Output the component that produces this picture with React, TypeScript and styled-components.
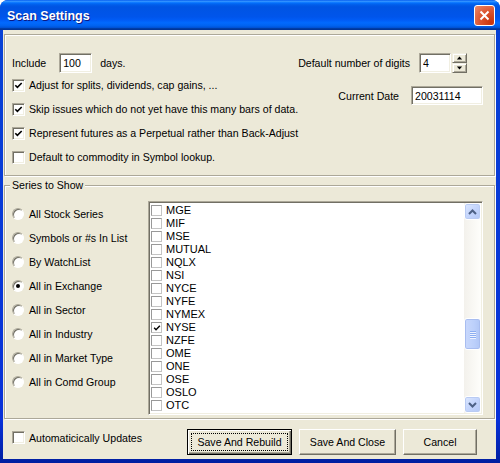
import React from 'react';
import styled, { createGlobalStyle } from 'styled-components';

const GlobalStyle = createGlobalStyle`
  html, body { margin: 0; padding: 0; background: #fff; }
  body {
    font-family: "Liberation Sans", Arial, sans-serif;
    font-size: 10.6px;
    color: #000;
  }
`;

const FONT = `"Liberation Sans", Arial, sans-serif`;

const Window = styled.div`
  width: 500px;
  height: 463px;
  display: flex;
  flex-direction: column;
  border-radius: 8px 8px 0 0;
  overflow: hidden;
  background: #0842d6;
`;

const TitleBar = styled.div`
  height: 30px;
  flex: none;
  display: flex;
  align-items: center;
  padding: 0 5px 0 7px;
  box-sizing: border-box;
  background: linear-gradient(
    to bottom,
    #0058ee 0%, #3593ff 4%, #288eff 6%, #127dff 8%, #036ffc 10%,
    #0262ee 14%, #0057e5 20%, #0054e3 24%, #0055eb 56%, #005bf5 66%,
    #026afe 76%, #0062ef 86%, #0052d6 92%, #0040ab 94%, #003092 100%
  );
`;

const Title = styled.span`
  flex: 1;
  color: #fff;
  font: bold 12.5px ${FONT};
  text-shadow: 1px 1px #0a1883;
  margin-top: 2px;
`;

const CloseButton = styled.div`
  width: 21px;
  height: 21px;
  box-sizing: border-box;
  border: 1px solid #fff;
  border-radius: 3px;
  background: radial-gradient(circle at 85% 85%, #c8340a 0%, #dc5530 50%, #ea8a6c 100%);
  display: flex;
  align-items: center;
  justify-content: center;
`;

const Frame = styled.div`
  flex: 1;
  display: flex;
  padding: 0 4px 4px 3px;
  background: linear-gradient(to bottom, #0842d6, #0831d9 90%, #001ea0);
`;

const Client = styled.div`
  flex: 1;
  display: flex;
  flex-direction: column;
  padding: 4px 1px 0;
  background: #ece9d8;
`;

const Panel = styled.div`
  height: 142px;
  flex: none;
  box-sizing: border-box;
  border: 1px solid #aca899;
  box-shadow: inset 1px 1px #fff, 1px 1px #fff;
  display: grid;
  grid-template-columns: 1fr auto;
  align-items: start;
  padding: 18px 11px 0 7px;
`;

const LeftCol = styled.div`
  display: flex;
  flex-direction: column;
`;

const IncludeRow = styled.div`
  height: 20px;
  display: flex;
  align-items: center;
`;

const Label = styled.span<{ $gap?: number }>`
  margin-right: ${p => p.$gap ?? 0}px;
  white-space: nowrap;
`;

const TextBox = styled.input<{ $w: number }>`
  width: ${p => p.$w}px;
  height: 20px;
  box-sizing: border-box;
  margin: 0;
  padding: 0 0 0 3px;
  background: #fff;
  font: 10.6px ${FONT};
  color: #000;
  border: 1px solid;
  border-color: #aca899 #fff #fff #aca899;
  box-shadow: inset 1px 1px #716f64, inset -1px -1px #f1efe2;
  outline: none;
`;

const CheckRow = styled.div<{ $h?: number }>`
  height: ${p => p.$h ?? 24}px;
  display: flex;
  align-items: center;
  gap: 4px;
  white-space: nowrap;
`;

const CheckBox = styled.span`
  width: 13px;
  height: 13px;
  flex: none;
  box-sizing: border-box;
  background: #fff;
  border: 1px solid;
  border-color: #aca899 #fff #fff #aca899;
  box-shadow: inset 1px 1px #716f64, inset -1px -1px #f1efe2;
  display: flex;
  align-items: center;
  justify-content: center;
`;

const RightCol = styled.div`
  display: flex;
  flex-direction: column;
  align-items: flex-end;
  gap: 13px;
`;

const FieldRow = styled.div<{ $gap: number; $right?: number }>`
  display: flex;
  align-items: center;
  gap: ${p => p.$gap}px;
  margin-right: ${p => p.$right ?? 0}px;
`;

const Spin = styled.div`
  display: flex;
  align-items: center;
`;

const SpinButtons = styled.div`
  display: flex;
  flex-direction: column;
  margin-left: 1px;
`;

const SpinButton = styled.div`
  width: 15px;
  height: 10px;
  box-sizing: border-box;
  background: #ece9d8;
  border: 1px solid;
  border-color: #f1efe2 #716f64 #716f64 #f1efe2;
  box-shadow: inset 1px 1px #fff, inset -1px -1px #aca899;
  display: flex;
  align-items: center;
  justify-content: center;
`;

const Group = styled.fieldset`
  margin: 3px 0 0;
  padding: 9px 11px 3px 7px;
  border: 1px solid #aca899;
  box-shadow: inset 1px 1px #fff, 1px 1px #fff;
  min-width: 0;
  flex: none;
`;

const Legend = styled.legend`
  margin-left: -2px;
  padding: 0 2px;
  line-height: 13px;
  background: #ece9d8;
`;

const GroupBody = styled.div`
  display: flex;
  height: 214px;
`;

const RadioCol = styled.div`
  width: 136px;
  flex: none;
  display: flex;
  flex-direction: column;
  padding-top: 1px;
`;

const RadioRow = styled.div`
  height: 24px;
  display: flex;
  align-items: center;
  gap: 5px;
  white-space: nowrap;
`;

const Radio = styled.span<{ $on?: boolean }>`
  width: 12px;
  height: 12px;
  flex: none;
  box-sizing: border-box;
  border-radius: 50%;
  background: #fff;
  border: 1px solid;
  border-color: #aca899 #fff #fff #aca899;
  box-shadow: inset 1px 1px #716f64;
  display: flex;
  align-items: center;
  justify-content: center;
  &::after {
    content: '';
    width: 4px;
    height: 4px;
    border-radius: 50%;
    background: ${p => (p.$on ? '#000' : 'transparent')};
  }
`;

const ListBox = styled.div`
  flex: 1;
  display: flex;
  box-sizing: border-box;
  background: #fff;
  border: 1px solid;
  border-color: #aca899 #fff #fff #aca899;
  box-shadow: inset 1px 1px #716f64, inset -1px -1px #f1efe2;
  padding: 1px;
  min-width: 0;
`;

const Items = styled.div`
  flex: 1;
  overflow: hidden;
  padding-top: 1px;
`;

const Item = styled.div`
  height: 13px;
  display: flex;
  align-items: center;
  gap: 4px;
  padding-left: 1px;
  font-size: 11px;
  line-height: 13px;
`;

const ItemCheck = styled.span`
  width: 11px;
  height: 11px;
  flex: none;
  box-sizing: border-box;
  border: 1px solid;
  border-color: #999 #c4c4c4 #c4c4c4 #999;
  background: #fff;
  display: flex;
  align-items: center;
  justify-content: center;
`;

const ScrollBar = styled.div`
  width: 17px;
  flex: none;
  display: flex;
  flex-direction: column;
  background: linear-gradient(to right, #f3f1ec, #fefefb);
`;

const ScrollButton = styled.div`
  height: 17px;
  flex: none;
  box-sizing: border-box;
  border: 1px solid #fff;
  border-radius: 3px;
  background: linear-gradient(135deg, #dde8ff 0%, #c4d5fc 50%, #b4c8f6 100%);
  box-shadow: inset 0 0 0 1px #b9cbf3;
  display: flex;
  align-items: center;
  justify-content: center;
`;

const Track = styled.div`
  flex: 1;
  display: flex;
  flex-direction: column;
`;

const Thumb = styled.div`
  height: 32px;
  box-sizing: border-box;
  border: 1px solid #fff;
  border-radius: 3px;
  background: linear-gradient(to right, #c9d8fc 0%, #bcd0fb 60%, #b0c6f6 100%);
  box-shadow: inset 0 0 0 1px #a8bdf0;
  display: flex;
  flex-direction: column;
  align-items: center;
  justify-content: center;
  gap: 1px;
`;

const Grip = styled.span`
  width: 6px;
  height: 1px;
  background: #8caef1;
  box-shadow: 0 1px #eef3ff;
`;

const Footer = styled.div`
  flex: 1;
  display: flex;
  align-items: flex-start;
  padding: 10px 18px 0 8px;
`;

const AutoRow = styled.div`
  margin-top: 2px;
  display: flex;
  align-items: center;
  gap: 4px;
  white-space: nowrap;
`;

const Buttons = styled.div`
  margin-left: auto;
  display: flex;
  gap: 7px;
`;

const Button = styled.button<{ $w: number; $default?: boolean }>`
  width: ${p => p.$w}px;
  height: 26px;
  margin: 0;
  padding: ${p => (p.$default ? '3px' : '0')};
  box-sizing: border-box;
  display: flex;
  align-items: stretch;
  justify-content: center;
  font: 10.6px ${FONT};
  color: #000;
  background: #ece9d8;
  border: 1px solid;
  border-color: ${p => (p.$default ? '#000' : '#fff #716f64 #716f64 #fff')};
  box-shadow: ${p =>
    p.$default
      ? 'inset 1px 1px #fff, inset -1px -1px #716f64, inset -2px -2px #aca899'
      : 'inset -1px -1px #aca899'};
`;

const ButtonText = styled.span<{ $focus?: boolean }>`
  flex: 1;
  display: flex;
  align-items: center;
  justify-content: center;
  border: 1px dotted ${p => (p.$focus ? '#000' : 'transparent')};
`;

const Tick = ({ size = 9 }: { size?: number }) => (
  <svg width={size} height={size} viewBox="0 0 9 9">
    <path d="M1.3 4.2 L3.4 6.4 L7.7 2" fill="none" stroke="#000" strokeWidth="1.6" />
  </svg>
);

const Arrow = ({ up }: { up?: boolean }) => (
  <svg width="7" height="4" viewBox="0 0 7 4">
    <path d={up ? 'M0 4 L3.5 0 L7 4 Z' : 'M0 0 L3.5 4 L7 0 Z'} fill="#000" transform="scale(0.75) translate(1.2 0.6)" />
  </svg>
);

const Chevron = ({ up }: { up?: boolean }) => (
  <svg width="9" height="6" viewBox="0 0 9 6">
    <path
      d={up ? 'M1 5 L4.5 1.5 L8 5' : 'M1 1 L4.5 4.5 L8 1'}
      fill="none"
      stroke="#4d6185"
      strokeWidth="2"
    />
  </svg>
);

const options = [
  { text: 'Adjust for splits, dividends, cap gains, ...', on: true },
  { text: 'Skip issues which do not yet have this many bars of data.', on: true },
  { text: 'Represent futures as a Perpetual rather than Back-Adjust', on: true },
  { text: 'Default to commodity in Symbol lookup.', on: false },
];

const series = [
  'All Stock Series',
  'Symbols or #s In List',
  'By WatchList',
  'All in Exchange',
  'All in Sector',
  'All in Industry',
  'All in Market Type',
  'All in Comd Group',
];

const exchanges = [
  'MGE', 'MIF', 'MSE', 'MUTUAL', 'NQLX', 'NSI', 'NYCE', 'NYFE', 'NYMEX',
  'NYSE', 'NZFE', 'OME', 'ONE', 'OSE', 'OSLO', 'OTC', 'OTCBB',
];

export default function App() {
  const selected = 3;
  const checked = 'NYSE';
  const thumbOffset = 98;

  return (
    <>
      <GlobalStyle />
      <Window>
        <TitleBar>
          <Title>Scan Settings</Title>
          <CloseButton>
            <svg width="11" height="11" viewBox="0 0 11 11">
              <path d="M1.5 1.5 L9.5 9.5 M9.5 1.5 L1.5 9.5" stroke="#fff" strokeWidth="2" />
            </svg>
          </CloseButton>
        </TitleBar>
        <Frame>
          <Client>
            <Panel>
              <LeftCol>
                <IncludeRow>
                  <Label $gap={13}>Include</Label>
                  <TextBox $w={33} defaultValue="100" readOnly />
                  <Label style={{ marginLeft: 8 }}>days.</Label>
                </IncludeRow>
                {options.map(o => (
                  <CheckRow key={o.text}>
                    <CheckBox>{o.on && <Tick />}</CheckBox>
                    <span>{o.text}</span>
                  </CheckRow>
                ))}
              </LeftCol>
              <RightCol>
                <FieldRow $gap={9} $right={16}>
                  <Label>Default number of digits</Label>
                  <Spin>
                    <TextBox $w={32} defaultValue="4" readOnly />
                    <SpinButtons>
                      <SpinButton><Arrow up /></SpinButton>
                      <SpinButton><Arrow /></SpinButton>
                    </SpinButtons>
                  </Spin>
                </FieldRow>
                <FieldRow $gap={12}>
                  <Label>Current Date</Label>
                  <TextBox $w={72} defaultValue="20031114" readOnly style={{ height: 19 }} />
                </FieldRow>
              </RightCol>
            </Panel>

            <Group>
              <Legend>Series to Show</Legend>
              <GroupBody>
                <RadioCol>
                  {series.map((s, i) => (
                    <RadioRow key={s}>
                      <Radio $on={i === selected} />
                      <span>{s}</span>
                    </RadioRow>
                  ))}
                </RadioCol>
                <ListBox>
                  <Items>
                    {exchanges.map(x => (
                      <Item key={x}>
                        <ItemCheck>{x === checked && <Tick size={8} />}</ItemCheck>
                        <span>{x}</span>
                      </Item>
                    ))}
                  </Items>
                  <ScrollBar>
                    <ScrollButton><Chevron up /></ScrollButton>
                    <Track>
                      <Thumb style={{ marginTop: thumbOffset }}>
                        <Grip /><Grip /><Grip /><Grip />
                      </Thumb>
                    </Track>
                    <ScrollButton><Chevron /></ScrollButton>
                  </ScrollBar>
                </ListBox>
              </GroupBody>
            </Group>

            <Footer>
              <AutoRow>
                <CheckBox />
                <span>Automaticically Updates</span>
              </AutoRow>
              <Buttons>
                <Button $w={105} $default>
                  <ButtonText $focus>Save And Rebuild</ButtonText>
                </Button>
                <Button $w={97}>
                  <ButtonText>Save And Close</ButtonText>
                </Button>
                <Button $w={74}>
                  <ButtonText>Cancel</ButtonText>
                </Button>
              </Buttons>
            </Footer>
          </Client>
        </Frame>
      </Window>
    </>
  );
}
